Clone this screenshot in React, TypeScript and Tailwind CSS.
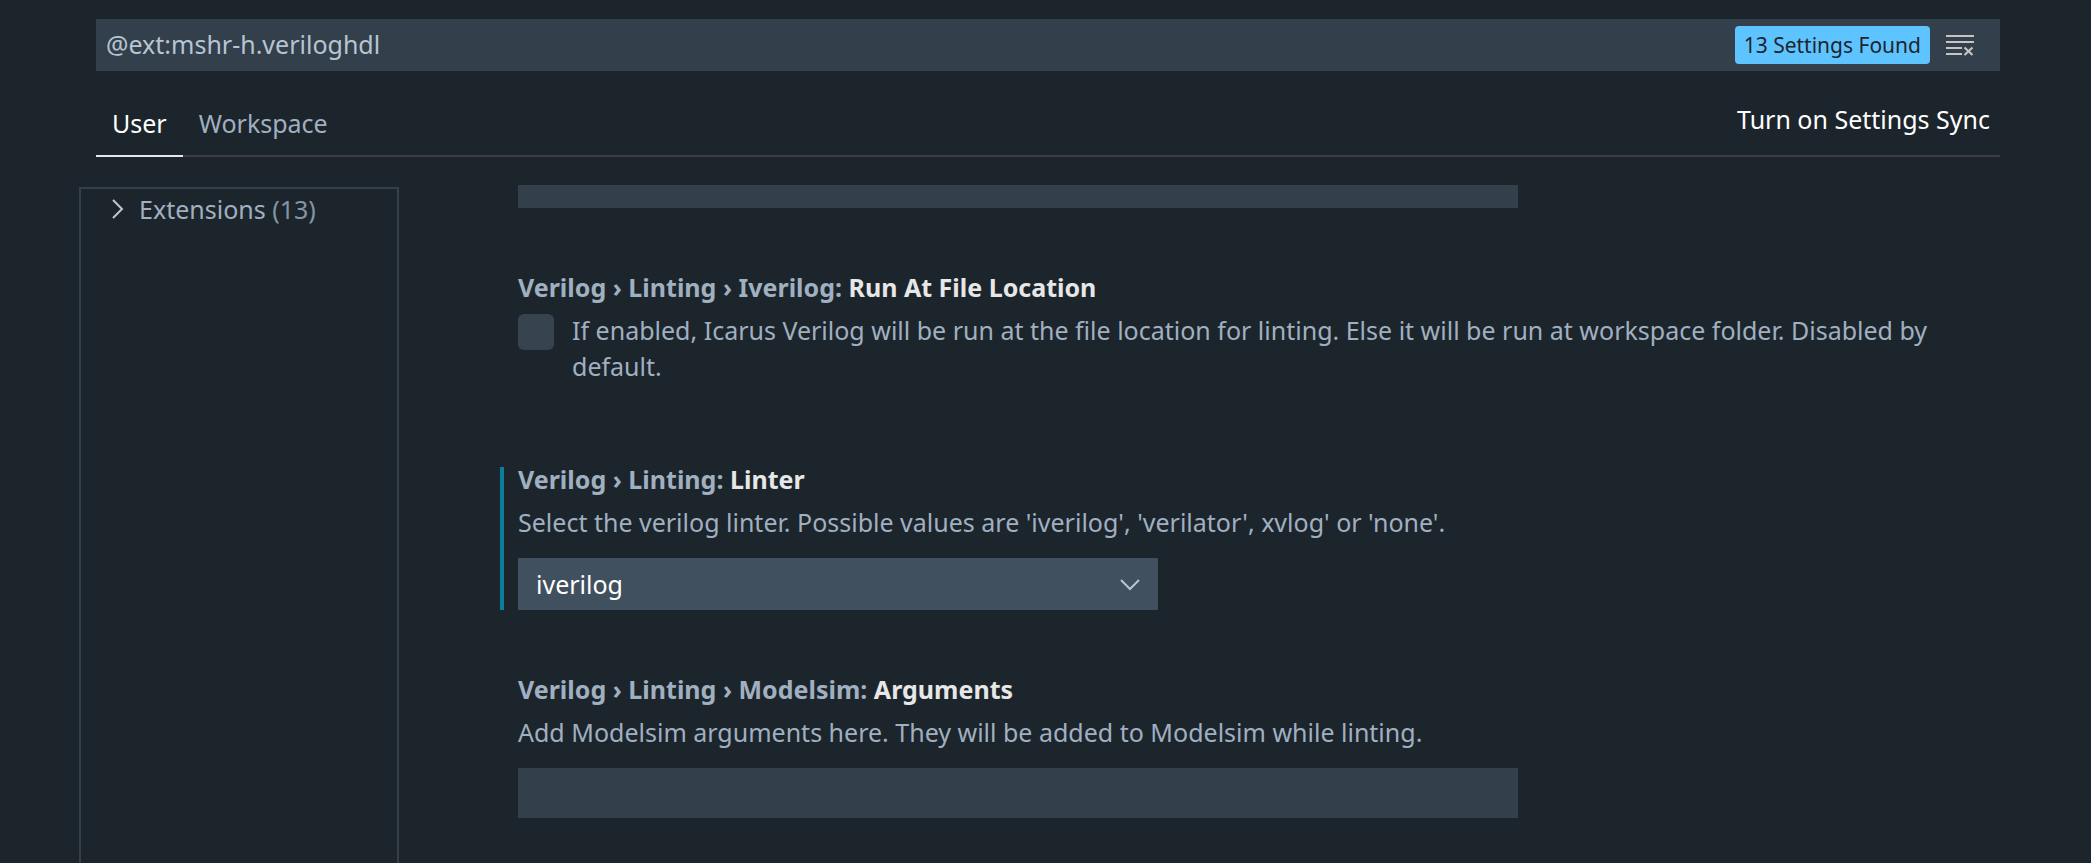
import type { ReactNode } from "react";

function SettingTitle({ path, name }: { path: string; name: string }) {
  return (
    <h2 className="leading-6 font-bold text-[#a0b0c0]">
      {path} <span className="text-[#e7e7e7]">{name}</span>
    </h2>
  );
}

function Setting({ modified, children }: { modified?: boolean; children: ReactNode }) {
  return (
    <section className={modified ? "border-l-4 border-[#0c7d9d] pl-3.5" : "border-l-4 border-transparent pl-3.5"}>
      {children}
    </section>
  );
}

export default function App() {
  return (
    <div className="flex h-screen flex-col overflow-hidden bg-[#1d252c] font-['Noto_Sans',sans-serif] text-[25px] leading-9 text-[#a0b0c0]">
      <header className="mr-[91px] ml-24 pt-[19px]">
        <div className="flex h-[52px] items-center bg-[#333f4a] pr-6">
          <input
            aria-label="Search settings"
            defaultValue="@ext:mshr-h.veriloghdl"
            className="h-full min-w-0 flex-1 bg-transparent px-2.5 pb-0.5 text-[#b7c5d3] outline-none"
          />
          <span className="flex h-[38px] items-center rounded bg-[#5ec4ff] px-[9px] text-[21px] text-[#1d252c]">
            13 Settings Found
          </span>
          <button type="button" aria-label="Clear search" className="ml-3.5 text-[#c5c5c5]">
            <svg className="size-8" viewBox="0 0 32 32" fill="none" stroke="currentColor" strokeWidth="2">
              <path d="M2 7h28M2 13h28M2 19h16M2 25h16" />
              <path strokeWidth="2.2" d="M20.500 18.500l8 7.500M28.500 18.500l-8 7.500" />
            </svg>
          </button>
        </div>
        <div className="flex h-[86px] justify-between border-b-2 border-[#3e3c3e]">
          <nav className="flex h-[86px]">
            <button type="button" className="border-b-2 border-[#e7e7e7] px-4 pt-5 text-white">
              User
            </button>
            <button type="button" className="border-b-2 border-transparent px-4 pt-5">
              Workspace
            </button>
          </nav>
          <button type="button" className="px-2.5 pt-3 text-white">
            Turn on Settings Sync
          </button>
        </div>
      </header>

      <div className="flex min-h-0 flex-1 pr-[91px] pl-[79px]">
        <aside className="mt-[30px] w-80 shrink-0 border-2 border-b-0 border-[#333f4a]">
          <button type="button" className="flex h-10 items-center pl-6">
            <svg className="size-7" viewBox="0 0 28 28" fill="none" stroke="#c5c5c5" strokeWidth="2">
              <path d="M8 5l9 9-9 9" />
            </svg>
            <span className="ml-1.5">
              Extensions <span className="opacity-80">(13)</span>
            </span>
          </button>
        </aside>

        <main className="mt-7 min-w-0 flex-1 overflow-hidden pl-[101px]">
          <Setting>
            <input aria-label="Iverilog arguments" className="block h-[23px] w-full max-w-[1000px] bg-[#333f4a] px-3" />
          </Setting>
          <div className="mt-[67px]">
            <Setting>
              <SettingTitle path="Verilog › Linting › Iverilog:" name="Run At File Location" />
              <label className="mt-[13px] flex min-h-[72px] gap-[18px]">
                <input
                  type="checkbox"
                  className="mt-0.5 size-9 shrink-0 appearance-none rounded-md bg-[#37434f] checked:bg-[#0c7d9d]"
                />
                <span>
                  If enabled, Icarus Verilog will be run at the file location for linting. Else it will be run at
                  workspace folder. Disabled by default.
                </span>
              </label>
            </Setting>
          </div>
          <div className="mt-[83px]">
            <Setting modified>
              <SettingTitle path="Verilog › Linting:" name="Linter" />
              <label htmlFor="linter" className="mt-[13px] block">
                Select the verilog linter. Possible values are 'iverilog', 'verilator', xvlog' or 'none'.
              </label>
              <div className="mt-[18px] grid max-w-[640px]">
                <select
                  id="linter"
                  className="col-start-1 row-start-1 h-[52px] appearance-none bg-[#41505e] px-[18px] text-white"
                >
                  <option>iverilog</option>
                  <option>verilator</option>
                  <option>xvlog</option>
                  <option>none</option>
                </select>
                <svg
                  className="pointer-events-none col-start-1 row-start-1 mr-3.5 size-7 self-center justify-self-end"
                  viewBox="0 0 28 28"
                  fill="none"
                  stroke="#b7c5d3"
                  strokeWidth="2"
                >
                  <path d="M5 10l9 9 9-9" />
                </svg>
              </div>
            </Setting>
          </div>
          <div className="mt-[67px]">
            <Setting>
              <SettingTitle path="Verilog › Linting › Modelsim:" name="Arguments" />
              <label htmlFor="modelsim" className="mt-[13px] block">
                Add Modelsim arguments here. They will be added to Modelsim while linting.
              </label>
              <input id="modelsim" className="mt-[18px] block h-[50px] w-full max-w-[1000px] bg-[#333f4a] px-3" />
            </Setting>
          </div>
        </main>
      </div>
    </div>
  );
}
